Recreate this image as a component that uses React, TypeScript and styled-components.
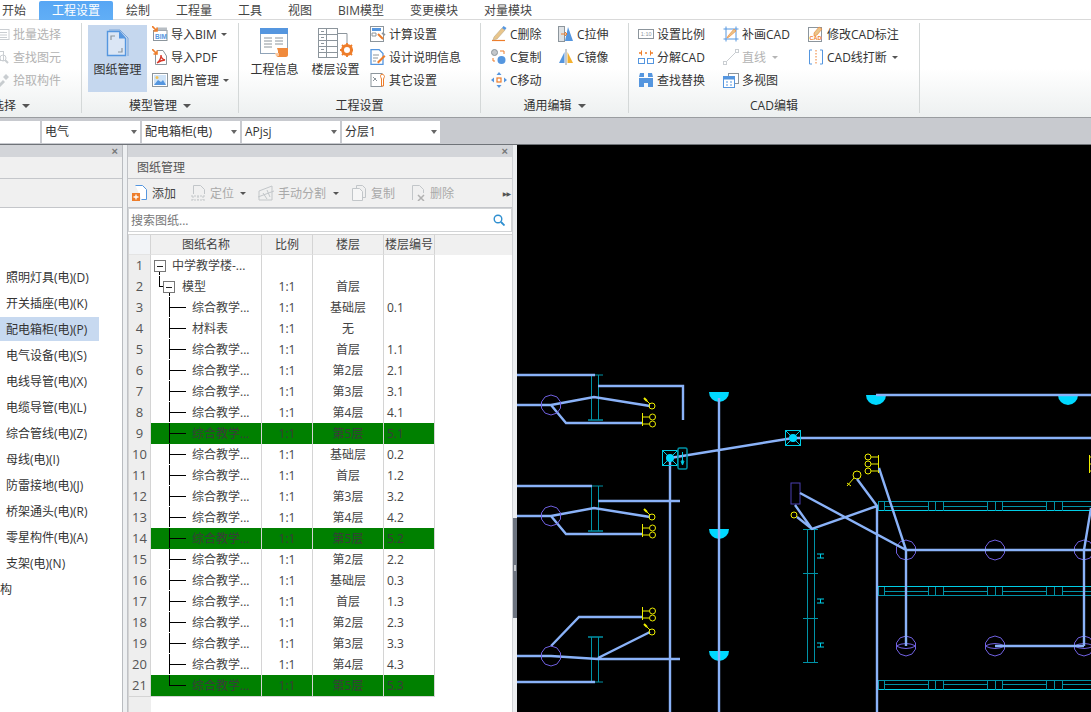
import React from "react";
import styled, { createGlobalStyle } from "styled-components";

const Global = createGlobalStyle`
  html, body { margin: 0; padding: 0; background: #fff; overflow: hidden; }
  * { box-sizing: border-box; }
  body { font-family: "Open Sans", "Noto Sans CJK SC", sans-serif; font-size: 12px; color: #333; }
`;

const Page = styled.div`
  width: 1091px; height: 712px; overflow: hidden; display: flex; flex-direction: column;
`;
const TabBar = styled.div`
  height: 20px; flex: none; display: flex; padding-left: 0; margin-left: -11px;
  border-bottom: 1px solid #d9d9d9; background: #fff;
`;
const Tab = styled.div<{ $active?: boolean }>`
  padding: 0 13px; height: 20px; margin-top: ${p => (p.$active ? 1 : 0)}px;
  line-height: ${p => (p.$active ? 19 : 21)}px;
  color: ${p => (p.$active ? "#fff" : "#444")};
  background: ${p => (p.$active ? "linear-gradient(#57a6f4,#62aff6)" : "transparent")};
  border-radius: 2px 2px 0 0;
  white-space: nowrap;
`;
const Ribbon = styled.div`
  height: 97px; flex: none; display: flex; margin-left: -59px;
  background: linear-gradient(#fff 0%, #fff 50%, #edf0f0 100%);
`;
const Group = styled.div<{ $w: number }>`
  width: ${p => p.$w}px; flex: none; margin: 3px 0 4px; display: flex; flex-direction: column;
  border-right: 1px solid #d4d8d8;
`;
const GroupBody = styled.div<{ $pl: number }>`
  height: 73px; display: flex; padding-left: ${p => p.$pl}px;
`;
const GroupLabel = styled.div<{ $low?: boolean }>`
  height: 17px; line-height: 17px; padding-top: ${p => (p.$low ? 2 : 1)}px; display: flex; align-items: center; justify-content: center; gap: 6px; color: #333;
`;
const Caret = styled.span`
  display: inline-block; width: 0; height: 0; border-left: 4px solid transparent; border-right: 4px solid transparent;
  border-top: 4px solid #555; margin-top: 1px;
`;
const SmallCaret = styled(Caret)<{ $faded?: boolean; $ml?: number }>`
  border-left-width: 3px; border-right-width: 3px; border-top-width: 3px;
  margin-left: ${p => p.$ml ?? 1}px; border-top-color: ${p => (p.$faded ? "#b5b5b5" : "#555")};
`;
const Col = styled.div<{ $w?: number; $ml?: number }>`
  display: flex; flex-direction: column; flex: none;
  width: ${p => (p.$w ? `${p.$w}px` : "auto")}; margin-left: ${p => p.$ml ?? 0}px;
`;
const SmallBtn = styled.div<{ $off?: boolean }>`
  height: 23px; display: flex; align-items: center; gap: 3px; white-space: nowrap; padding-bottom: 1px;
  color: ${p => (p.$off ? "#b3b3b3" : "#333")};
`;
const BigBtn = styled.div<{ $active?: boolean }>`
  width: 59px; height: 67px; margin-top: 2px; padding-top: 3px; display: flex; flex-direction: column; align-items: center;
  background: ${p => (p.$active ? "#c5d7ee" : "transparent")}; white-space: nowrap; flex: none;
`;
const BigIcon = styled.div`
  height: 30px; margin-bottom: 2px; display: flex; align-items: center; justify-content: center;
`;
const ComboRow = styled.div`
  height: 28px; flex: none; background: #c8cacf; border-top: 1px solid #9a9da0; border-bottom: 1px solid #6f7378;
  padding-top: 3px; display: flex; gap: 2px; margin-left: -58px;
`;
const Combo = styled.div`
  width: 98px; height: 22px; background: #fff; line-height: 22px; padding-left: 3px; position: relative; white-space: nowrap;
  display: flex; justify-content: space-between; align-items: center; padding-right: 3px;
`;
const ComboArrow = styled.span`
  width: 0; height: 0; border-left: 3px solid transparent; border-right: 3px solid transparent; border-top: 4px solid #666;
`;
const Main = styled.div`
  flex: 1; min-height: 0; display: flex; background: #e4e5e7;
`;
const LeftPanel = styled.div`
  width: 123px; flex: none; background: #fff; border-right: 1px solid #b9bcc0; display: flex; flex-direction: column;
`;
const TitleStrip = styled.div`
  height: 12px; flex: none; background: #d3d5d9; display: flex; justify-content: flex-end; align-items: center;
  padding-right: 4px; color: #777; font-size: 11px; line-height: 12px; font-family: "Liberation Sans", sans-serif; font-weight: bold;
`;
const PanelHead = styled.div`
  height: 22px; flex: none; background: #f0f0f0; border-bottom: 1px solid #c4c6ca; line-height: 22px; padding-left: 9px; color: #555;
`;
const PanelTools = styled.div`
  height: 29px; flex: none; background: #f0f0f0; border-bottom: 1px solid #c4c6ca; display: flex; align-items: center; padding-left: 4px;
`;
const CompList = styled.div`
  padding-top: 56px; display: flex; flex-direction: column;
`;
const CompItem = styled.div<{ $sel?: boolean; $pl?: number }>`
  width: 99px; height: 24px; margin: 1px 0; line-height: 26px; padding-left: ${p => p.$pl ?? 6}px; white-space: nowrap; color: #333;
  background: ${p => (p.$sel ? "#c7d9f0" : "transparent")};
`;
const Gutter = styled.div`
  width: 4px; flex: none; background: #eef0f2;
`;
const DrawPanel = styled.div`
  width: 386px; flex: none; background: #fff; border-left: 1px solid #c0c2c6; border-right: 1px solid #d0d2d6; display: flex; flex-direction: column;
`;
const Tool = styled.div<{ $off?: boolean; $ml: number }>`
  display: flex; align-items: center; gap: 4px; margin-left: ${p => p.$ml}px; white-space: nowrap;
  color: ${p => (p.$off ? "#a9a9a9" : "#444")};
`;
const More = styled.div`
  margin-left: auto; margin-right: 2px; color: #555; font-size: 6px; letter-spacing: -1px; font-family: "DejaVu Sans", sans-serif;
`;
const Search = styled.div`
  height: 24px; flex: none; margin: 0 0 2px; background: #fff; border: 1px solid #d2d4d6; display: flex; align-items: center;
  justify-content: space-between; padding: 0 6px 1px 2px; color: #777;
`;
const Table = styled.div`
  flex: 1; min-height: 0; display: flex; flex-direction: column; background: #fff; border-left: 1px solid #d4d4d4;
  background-image: linear-gradient(#eeeeee, #eeeeee); background-size: 22px 100%; background-repeat: no-repeat;
`;
const Columns = "22px 111px 51px 71px 51px";
const HeadRow = styled.div`
  height: 21px; flex: none; display: grid; grid-template-columns: ${Columns} 1fr; background: #f0f0f0;
  border-top: 1px solid #d4d4d4;
`;
const HeadCell = styled.div`
  border-right: 1px solid #d4d4d4; border-bottom: 1px solid #e4e4e4; text-align: center; line-height: 20px; color: #444; white-space: nowrap; overflow: hidden;
`;
const HeadFill = styled.div``;
const HeadCorner = styled(HeadCell)`background: #f2f4f7;`;
const Row = styled.div`
  height: 21px; flex: none; display: grid; grid-template-columns: ${Columns};
`;
const Cell = styled.div<{ $green?: boolean; $align?: string }>`
  border-right: 1px solid #d4d4d4; border-bottom: 1px solid #d4d4d4; line-height: 22px; overflow: hidden; white-space: nowrap;
  text-align: ${p => p.$align ?? "center"}; padding-left: ${p => (p.$align === "left" ? 3 : 0)}px;
  color: ${p => (p.$green ? "#3b3b3b" : "#444")};
  background: ${p => (p.$green ? "#008000" : "#fff")};
`;
const NumCell = styled.div`
  border-right: 1px solid #d4d4d4; border-bottom: 1px solid #d4d4d4; background: #eeeeee; text-align: center; line-height: 21px; color: #555;
  font-size: 13px;
`;
const NameCell = styled(Cell)`
  display: flex; align-items: flex-start; text-align: left;
`;
const Splitter = styled.div`
  width: 4px; flex: none; background: #eceef0; padding-top: 373px; display: flex; flex-direction: column;
`;
const SplitHandle = styled.div`
  height: 100px; background: #6d7480; display: flex; align-items: center; justify-content: center; color: #ccc;
`;
const HandleDot = styled.span`
  width: 2px; height: 6px; background: #c9ccd0;
`;
const Canvas = styled.div`
  flex: 1; background: #000; min-width: 0; height: 100%;
`;
const CanvasSvg = styled.svg`
  display: block; width: 574px; height: 567px;
`;

/* ---------- icons ---------- */
const B = "#5596df", O = "#ee7d2a", G = "#8c959c";
const S: React.FC<{ children: React.ReactNode; off?: boolean }> = ({ children, off }) => (
  <svg width="16" height="16" viewBox="0 0 16 16" fill="none" opacity={off ? 0.45 : 1}>{children}</svg>
);
const IcBatch = () => <S off><rect x="1" y="3.5" width="14" height="10" stroke={G} /><path d="M6 6.5h7M6 9h7M6 11.5h7" stroke={G} /></S>;
const IcFind = () => <S off><rect x="0.5" y="2.5" width="9" height="9" stroke={G} /><circle cx="9" cy="9" r="3" stroke={G} /><path d="M11 11l3 3" stroke={G} strokeWidth="2" /></S>;
const IcPick = () => <S off><path d="M3 14l6-6 2 2-6 6zM9 5l3-3 3 3-3 3z" fill={G} /></S>;
const IcBim = () => <S><rect x="1.5" y="4.5" width="13.5" height="10" fill="#fff" stroke={G} /><rect x="5" y="1.5" width="10" height="3" fill="#b8bec4" /><text x="3" y="13" fontSize="6.5" fontWeight="700" fill={B} fontFamily="Liberation Sans">BIM</text><path d="M0 0l5 5M5 1.5V5H1.5" stroke={O} strokeWidth="1.6" /></S>;
const IcPdf = () => <S><path d="M3.5 4.5v11h11V7L11 1.5H5" fill="#fff" stroke={G} /><path d="M5 14c3-2 4-5 4-8 0 3 1 4 4 5-3 0-5 1-8 3z" stroke="#d8392b" strokeWidth="1.3" /><path d="M0 0l5 5M5 1.5V5H1.5" stroke={O} strokeWidth="1.6" /></S>;
const IcPic = () => <S><rect x="0.5" y="1.5" width="15" height="13" fill="#fff" stroke={G} /><rect x="2" y="3" width="12" height="10" fill="#cfe3f7" /><path d="M2 13l4-5 3 2 2-2 3 5z" fill={B} /><circle cx="5" cy="5.5" r="1.5" fill="#f4c256" /></S>;
const IcCalc = () => <S><rect x="0.5" y="0.5" width="13" height="15" fill="#fff" stroke={G} /><rect x="2" y="2" width="9" height="3" fill={B} /><path d="M2 7h4v3H2z" stroke={G} /><path d="M8 8l5 5" stroke={O} strokeWidth="2" /><path d="M12 7l3 2" stroke={G} strokeWidth="2" /></S>;
const IcDoc = () => <S><path d="M1 .5h8l4 4v11H1z" fill="#fff" stroke={B} strokeWidth="1.3" /><path d="M3 6h6M3 9h5M3 12h3" stroke={G} /><path d="M7 13l7-7 1.500 1.500-7 7z" fill={O} /></S>;
const IcOther = () => <S><rect x="1" y="1.5" width="11" height="13" fill="#fff" stroke={G} /><path d="M3 5l4 4M3 9l3-3" stroke={G} /><path d="M11 2.500a2.500 2.500 0 013.500 2c0 1-1 1.500-1 2.500v7h-2V7c0-1-1-1.500-1-2.500 0-1 .3-1.500.5-2z" fill="#fff" stroke={O} /></S>;
const IcDel = () => <S><path d="M1 14.500h13" stroke={O} strokeWidth="1.2" /><path d="M3 11l8-9 3 2-8 9-4 1z" fill="#e9c58a" stroke="#b8a98a" strokeWidth=".6" /><path d="M11 2l1.500-2 3 2-1.500 2z" fill={B} /></S>;
const IcCopy = () => <S><circle cx="3.500" cy="3.500" r="3" fill="#c3c7cb" stroke={G} /><circle cx="10.500" cy="11" r="4" fill={B} /><path d="M9 2h4v3M2 9v3h2" stroke={O} /></S>;
const IcMove = () => <S><rect x="6" y="6" width="4" height="4" stroke={O} strokeWidth="1.2" /><path d="M8 0l2.500 3h-5zM8 16l2.500-3h-5zM0 8l3-2.500v5zM16 8l-3-2.500v5z" fill={B} /></S>;
const IcStretch = () => <S><rect x="0.500" y="0.500" width="6" height="15" fill="#dfe2e5" stroke={G} /><path d="M10 1l5 14H7z" fill={B} /><path d="M3 8h6M7 6l2 2-2 2" stroke={O} /></S>;
const IcMirror = () => <S><path d="M6.500 3v11H1z" fill={B} /><path d="M9.500 3v11H15z" fill="#f4b12f" /><path d="M8 0v16" stroke={G} /></S>;
const IcScale = () => <S><rect x="0.500" y="3.500" width="15" height="9" fill="#fff" stroke={G} /><text x="2.800" y="10.300" fontSize="5.500" fill={G} fontFamily="Liberation Sans">1:10</text></S>;
const IcSplit = () => <S><path d="M1 4h3M7 4h2M12 4h3" stroke={O} strokeWidth="1.400" /><path d="M3.500 1.500v5M12.500 1.500v5" stroke={O} /><rect x="0.500" y="9.500" width="6" height="5" stroke={B} /><rect x="9.500" y="9.500" width="6" height="5" stroke={B} /></S>;
const IcReplace = () => <S><path d="M1 5h5V1H2zM10 1h4l1 4h-5zM1 6h14v9h-5v-4H6v4H1z" fill={B} /></S>;
const IcPatch = () => <S><path d="M3 .5v15M13 .5v15M.5 3h15M.5 13h15" stroke={B} /><path d="M5 10l6-7 2 2-7 6-2 1z" fill="#e9c58a" stroke={O} strokeWidth=".6" /></S>;
const IcLine = () => <S off><path d="M2 14L14 2" stroke={G} /><rect x="0.500" y="12.500" width="3" height="3" fill="#fff" stroke={G} /><rect x="12.500" y="0.500" width="3" height="3" fill="#fff" stroke={G} /></S>;
const IcViews = () => <S><rect x="5.500" y="1.500" width="10" height="10" fill="#fff" stroke={G} /><rect x="0.500" y="4.500" width="11" height="11" fill="#fff" stroke={B} /><rect x="1" y="5" width="10" height="2.500" fill={B} /><path d="M3 10h2M7 10h2M3 13h2M7 13h2" stroke={B} /></S>;
const IcLabel = () => <S><rect x="0.500" y="1.500" width="13" height="14" fill="#fff" stroke={G} /><text x="1.500" y="13.500" fontSize="5.500" fontWeight="700" fill={O} fontFamily="Liberation Sans">CAD</text><path d="M6 7l5-6 3 2-5 6-3 1z" fill="#e9c58a" stroke={O} strokeWidth=".6" /></S>;
const IcBreak = () => <S><path d="M4 1H1.500v14H4M12 1h2.500v14H12" stroke={B} /><path d="M8 1v14" stroke={O} strokeDasharray="1.500 1.500" /></S>;

const IcSheets = () => (
  <svg width="24" height="29" viewBox="0 0 24 29" fill="none">
    <path d="M3 1h11l8 8v18" stroke="#7da7da" /><path d="M1.500 2.500h12l6 7v17h-18z" fill="#dbe6f5" stroke={B} strokeWidth="1.400" />
    <path d="M13 2.500l6 7h-6z" fill={B} /><path d="M5 11V7h4M16 19v4h-4" stroke={G} strokeWidth="1.200" />
  </svg>
);
const IcInfo = () => (
  <svg width="31" height="30" viewBox="0 0 31 30" fill="none">
    <rect x="1.500" y="0.500" width="27" height="25" fill="#fff" stroke="#8fa3b8" />
    <rect x="1" y="0" width="28" height="6" fill={B} />
    <path d="M5 10h8M5 13h8M5 16h8M5 19h8M16 10h8M16 13h8M16 16h8" stroke={G} />
    <path d="M18 20h11v7c0 1-1 2-2 2H17c1 0 2-1 2-2v-4z" fill="#f08a3c" /><path d="M16 25h4v3h-3z" fill="#f8c79f" />
  </svg>
);
const IcFloor = () => (
  <svg width="35" height="30" viewBox="0 0 35 30" fill="none">
    <rect x="0.500" y="0.500" width="19" height="29" fill="#fff" stroke={G} />
    <path d="M0 6.500h20M0 12.500h20M0 18.500h20M0 24.500h20M8.500 0v30" stroke={G} />
    <path d="M3 3.500h3M3 9.500h3M3 15.500h3M3 21.500h3" stroke={G} />
    <path d="M20 5.500h9v10" stroke={G} />
    <circle cx="29" cy="22" r="4.500" stroke={O} strokeWidth="3" />
    <path d="M29 15v3M29 26v3M22 22h3M33 22h3M24 17l2 2M32 25l2 2M34 17l-2 2M26 25l-2 2" stroke={O} strokeWidth="1.800" />
  </svg>
);
const IcAdd = () => <S><path d="M3.500.500h7l4 4v10h-5" fill="#fff" stroke={B} /><rect x="0" y="8" width="8" height="8" fill={O} /><path d="M4 9.500v5M1.500 12h5" stroke="#fff" strokeWidth="1.300" /></S>;
const IcLocate = () => <S off><path d="M3.500 9V.500h7l4 4V9" stroke={G} /><path d="M1 11h14M3 11v4M8 11v4M13 11v4M1 15h14" stroke={G} strokeDasharray="2 1" /></S>;
const IcManual = () => <S off><path d="M1 15V6l13-5v14z" stroke={G} /><path d="M0 12l16-6M5 8l4 6M9 5l3 7" stroke={G} /></S>;
const IcDup = () => <S off><path d="M5.500 3V.500h6l3 3v9h-3" stroke={G} /><path d="M1.500 3.500h7l3 3v9h-10z" fill="#fff" stroke={G} /></S>;
const IcRemove = () => <S off><path d="M2.500 15V.500h7l4 4V8" stroke={G} /><path d="M8 10l6 6M14 10l-6 6" stroke="#666" strokeWidth="1.500" /></S>;
const IcSearch = () => (
  <svg width="12" height="12" viewBox="0 0 12 12" fill="none"><circle cx="5" cy="5" r="3.800" stroke="#2f8fd0" strokeWidth="1.400" /><path d="M8 8l3.500 3.500" stroke="#2f8fd0" strokeWidth="1.800" /></svg>
);

/* ---------- tree connector ---------- */
type Kind = "root" | "model" | "leaf" | "last";
const Tree: React.FC<{ kind: Kind }> = ({ kind }) => {
  const w = kind === "root" ? 21 : kind === "model" ? 31 : 41;
  return (
    <svg width={w} height="20" viewBox={`0 0 ${w} 20`} fill="none" shapeRendering="crispEdges">
      {kind === "root" && <>
        <path d="M8.500 16v4" stroke="#000" />
        <rect x="3.500" y="5.500" width="11" height="11" rx="1" fill="#fff" stroke="#777" />
        <path d="M6 11h6" stroke="#222" />
      </>}
      {kind === "model" && <>
        <path d="M8.500 0v10.500h4M18.500 16v4" stroke="#000" />
        <rect x="12.500" y="5.500" width="11" height="11" rx="1" fill="#fff" stroke="#777" />
        <path d="M15 11h6" stroke="#222" />
      </>}
      {kind === "leaf" && <path d="M18.500 0v21M18 10.500h17" stroke="#000" />}
      {kind === "last" && <path d="M18.500 0v10.500H35" stroke="#000" />}
    </svg>
  );
};

/* ---------- canvas ---------- */
const L = "#8ab2f8", T = "#0092a6", C = "#00cde6", Y = "#eeee00", V = "#7060e0", K = "#00d8ff";
const Wire: React.FC<{ d: string }> = ({ d }) => <path d={d} stroke={L} strokeWidth="2.400" fill="none" />;
const Octa: React.FC<{ x: number; y: number; lens?: boolean }> = ({ x, y, lens }) => {
  const pts = Array.from({ length: 10 }, (_, i) => {
    const a = (i / 10) * Math.PI * 2 + Math.PI / 10;
    return `${(x + Math.cos(a) * 10).toFixed(1)},${(y + Math.sin(a) * 10).toFixed(1)}`;
  }).join(" ");
  return <g stroke={V} fill="none"><polygon points={pts} />{lens && <path d={`M${x - 10} ${y}Q${x} ${y - 5} ${x + 10} ${y}Q${x} ${y + 5} ${x - 10} ${y}`} />}</g>;
};
const Beam: React.FC<{ y1: number; y2: number; thickTop?: boolean }> = ({ y1, y2, thickTop }) => (
  <g stroke={T} fill="none">
    <path d={`M591.500 ${y1}V${y2}M598.500 ${y1}V${y2}`} />
    <path d={thickTop ? `M588 ${y1}H603` : `M592 ${y1}H603`} strokeWidth={thickTop ? 1.500 : 1} />
    <path d={thickTop ? `M592 ${y2}H603` : `M588 ${y2}H603`} strokeWidth={thickTop ? 1 : 1.500} />
  </g>
);
const Switch: React.FC<{ x: number; y: number }> = ({ x, y }) => (
  <g stroke={Y} fill="none"><circle cx={x} cy={y} r="3" /><path d={`M${x - 8} ${y - 8}L${x - 2} ${y - 2}`} /><path d={`M${x - 8} ${y - 8}L${x - 5} ${y - 5}`} strokeWidth="2" /></g>
);
const Duo: React.FC<{ y: number }> = ({ y }) => (
  <g stroke={Y} fill="none"><path d={`M642.500 ${y - 4}V${y + 9}M643 ${y}H649M643 ${y + 7}H649`} /><circle cx="652.500" cy={y} r="3" /><circle cx="652.500" cy={y + 7} r="3" /></g>
);
const Lamp: React.FC<{ x: number; y: number }> = ({ x, y }) => (
  <path d={`M${x - 10} ${y}H${x + 10}A10 10 0 0 1 ${x - 10} ${y}Z`} fill={K} />
);
const Box: React.FC<{ x: number; y: number }> = ({ x, y }) => (
  <g><rect x={x - 7.500} y={y - 7.500} width="15" height="15" stroke={C} fill="none" /><path d={`M${x - 7} ${y - 7}L${x + 7} ${y + 7}M${x + 7} ${y - 7}L${x - 7} ${y + 7}`} stroke={C} /><circle cx={x} cy={y} r="4" fill={K} /></g>
);
const Strip: React.FC<{ a: number; b: number; c: number; ca: string; cb: string; cc: string }> = ({ a, b, c, ca, cb, cc }) => {
  const vs = [878.500, 884.500, 928.500, 935.500, 943.500, 987.500, 995.500, 1002.500, 1046.500, 1054.500, 1062.500];
  const mids: [number, number][] = [[885, 928], [944, 987], [1003, 1046], [1063, 1091]];
  return (
    <g fill="none" shapeRendering="crispEdges">
      <path d={`M878 ${a}H1091`} stroke={ca} />
      <path d={`M878 ${c}H1091`} stroke={cc} />
      {mids.map(([s, e]) => <path key={s} d={`M${s} ${b}H${e}`} stroke={cb} />)}
      {vs.map(v => <path key={v} d={`M${v} ${a}V${c}`} stroke={T} />)}
    </g>
  );
};
const Drawing = () => (
  <CanvasSvg viewBox="517 145 574 567">
    {/* group A */}
    <Beam y1={375} y2={420} />
    <Wire d="M517 375H595M598 386H683V420M517 405H551L594 397L650 406M551 405L566 423H643" />
    <Octa x={551} y={405} /><Switch x={652} y={406} /><Duo y={417} />
    {/* group B */}
    <Beam y1={486} y2={531} />
    <Wire d="M517 486H592M598 501H680M517 516H551L594 508L650 517M551 516L566 534H643" />
    <Octa x={551} y={516} /><Switch x={652} y={517} /><Duo y={528} />
    {/* group C */}
    <Beam y1={637} y2={682} thickTop />
    <Wire d="M517 656H551L598 659H680M551 646L579 617H643M598 658L650 632M517 682H595" />
    <Octa x={551} y={656} /><Switch x={652} y={632} /><Duo y={611} />
    {/* risers */}
    <Lamp x={719} y={392} /><Lamp x={719} y={529} /><Lamp x={719} y={651} />
    <Wire d="M670 458V712M719 398V712M670 458L793 438H1091" />
    <Box x={670} y={458} /><Box x={793} y={438} />
    <rect x="678" y="448" width="9" height="21" rx="1.500" stroke={T} strokeWidth="1.500" fill="none" />
    <path d="M682.500 452V464M681 461h3l-1.500 4z" stroke={C} fill="none" />
    {/* right area */}
    <Lamp x={876} y={395} /><Lamp x={1068} y={395} />
    <Wire d="M876 395H1091" />
    <g stroke={Y} fill="none">
      <path d="M878.500 455V473M871 457H878M871 464H878M871 471H878" />
      <circle cx="868" cy="457" r="3" /><circle cx="868" cy="464" r="3" /><circle cx="868" cy="471" r="3" />
      <circle cx="857" cy="475" r="4" /><path d="M854 478L847 486M847 483L851 486" />
      <circle cx="794" cy="515" r="3" />
      <path d="M1089.500 455V473M1089 457H1091M1089 464H1091M1089 471H1091" />
    </g>
    <rect x="791" y="483" width="9" height="21" stroke="#4a3fb0" fill="none" />
    <Strip a={501.500} b={506.500} c={510.500} ca={T} cb={T} cc={C} />
    <Strip a={586.500} b={591.500} c={595.500} ca={C} cb={T} cc={T} />
    <Strip a={680.500} b={684.500} c={689.500} ca={T} cb={T} cc={C} />
    <g stroke={T} fill="none">
      <path d="M807.500 529V663M814.500 529V663M803 529.500H818M803 573.500H818M803 618.500H818M803 662.500H818" />
    </g>
    <g stroke={C} fill="none">
      <path d="M817 554H824M817 558H824M820.500 554V558" /><path d="M817 599H824M817 603H824M820.500 599V603" /><path d="M817 643H824M817 647H824M820.500 643V647" />
    </g>
    <Octa x={906} y={550} /><Octa x={995} y={550} /><Octa x={1084} y={550} />
    <Octa x={906} y={646} lens /><Octa x={995} y={646} lens /><Octa x={1084} y={646} lens />
    <Wire d="M857 479L877 506V712M879 468L906 550H1091M800 493L906 550V646M795 505L812 529M797 517L812 529L877 506M1084 550V646M995 646H1084M1084 550L1091 508" />
  </CanvasSvg>
);

/* ---------- data ---------- */
const tabs = ["开始", "工程设置", "绘制", "工程量", "工具", "视图", "BIM模型", "变更模块", "对量模块"];
const comps = ["照明灯具(电)(D)", "开关插座(电)(K)", "配电箱柜(电)(P)", "电气设备(电)(S)", "电线导管(电)(X)", "电缆导管(电)(L)", "综合管线(电)(Z)", "母线(电)(I)", "防雷接地(电)(J)", "桥架通头(电)(R)", "零星构件(电)(A)", "支架(电)(N)"];
const N = "综合教学...";
const rows: { n: string; k: Kind; r: string; f: string; c: string; g?: boolean }[] = [
  { n: "中学教学楼-...", k: "root", r: "", f: "", c: "" },
  { n: "模型", k: "model", r: "1:1", f: "首层", c: "" },
  { n: N, k: "leaf", r: "1:1", f: "基础层", c: "0.1" },
  { n: "材料表", k: "leaf", r: "1:1", f: "无", c: "" },
  { n: N, k: "leaf", r: "1:1", f: "首层", c: "1.1" },
  { n: N, k: "leaf", r: "1:1", f: "第2层", c: "2.1" },
  { n: N, k: "leaf", r: "1:1", f: "第3层", c: "3.1" },
  { n: N, k: "leaf", r: "1:1", f: "第4层", c: "4.1" },
  { n: N, k: "leaf", r: "1:1", f: "第5层", c: "5.1", g: true },
  { n: N, k: "leaf", r: "1:1", f: "基础层", c: "0.2" },
  { n: N, k: "leaf", r: "1:1", f: "首层", c: "1.2" },
  { n: N, k: "leaf", r: "1:1", f: "第3层", c: "3.2" },
  { n: N, k: "leaf", r: "1:1", f: "第4层", c: "4.2" },
  { n: N, k: "leaf", r: "1:1", f: "第5层", c: "5.2", g: true },
  { n: N, k: "leaf", r: "1:1", f: "第2层", c: "2.2" },
  { n: N, k: "leaf", r: "1:1", f: "基础层", c: "0.3" },
  { n: N, k: "leaf", r: "1:1", f: "首层", c: "1.3" },
  { n: N, k: "leaf", r: "1:1", f: "第2层", c: "2.3" },
  { n: N, k: "leaf", r: "1:1", f: "第3层", c: "3.3" },
  { n: N, k: "leaf", r: "1:1", f: "第4层", c: "4.3" },
  { n: N, k: "last", r: "1:1", f: "第5层", c: "5.3", g: true },
];

export default function App() {
  return (
    <Page>
      <Global />
      <TabBar>
        {tabs.map(t => <Tab key={t} $active={t === "工程设置"}>{t}</Tab>)}
      </TabBar>
      <Ribbon>
        <Group $w={141}>
          <GroupBody $pl={53}>
            <Col>
              <SmallBtn $off><IcBatch />批量选择</SmallBtn>
              <SmallBtn $off><IcFind />查找图元</SmallBtn>
              <SmallBtn $off><IcPick />拾取构件</SmallBtn>
            </Col>
          </GroupBody>
          <GroupLabel>选择<Caret /></GroupLabel>
        </Group>
        <Group $w={157}>
          <GroupBody $pl={6}>
            <BigBtn $active><BigIcon><IcSheets /></BigIcon>图纸管理</BigBtn>
            <Col $ml={5}>
              <SmallBtn><IcBim />导入BIM<SmallCaret /></SmallBtn>
              <SmallBtn><IcPdf />导入PDF</SmallBtn>
              <SmallBtn><IcPic />图片管理<SmallCaret /></SmallBtn>
            </Col>
          </GroupBody>
          <GroupLabel>模型管理<Caret /></GroupLabel>
        </Group>
        <Group $w={242}>
          <GroupBody $pl={6}>
            <BigBtn><BigIcon><IcInfo /></BigIcon>工程信息</BigBtn>
            <Col $ml={2}><BigBtn><BigIcon><IcFloor /></BigIcon>楼层设置</BigBtn></Col>
            <Col $ml={5}>
              <SmallBtn><IcCalc />计算设置</SmallBtn>
              <SmallBtn><IcDoc />设计说明信息</SmallBtn>
              <SmallBtn><IcOther />其它设置</SmallBtn>
            </Col>
          </GroupBody>
          <GroupLabel $low>工程设置</GroupLabel>
        </Group>
        <Group $w={148}>
          <GroupBody $pl={10}>
            <Col $w={67}>
              <SmallBtn><IcDel />C删除</SmallBtn>
              <SmallBtn><IcCopy />C复制</SmallBtn>
              <SmallBtn><IcMove />C移动</SmallBtn>
            </Col>
            <Col>
              <SmallBtn><IcStretch />C拉伸</SmallBtn>
              <SmallBtn><IcMirror />C镜像</SmallBtn>
            </Col>
          </GroupBody>
          <GroupLabel>通用编辑<Caret /></GroupLabel>
        </Group>
        <Group $w={291}>
          <GroupBody $pl={9}>
            <Col $w={85}>
              <SmallBtn><IcScale />设置比例</SmallBtn>
              <SmallBtn><IcSplit />分解CAD</SmallBtn>
              <SmallBtn><IcReplace />查找替换</SmallBtn>
            </Col>
            <Col $w={85}>
              <SmallBtn><IcPatch />补画CAD</SmallBtn>
              <SmallBtn $off><IcLine />直线<SmallCaret $faded $ml={3} /></SmallBtn>
              <SmallBtn><IcViews />多视图</SmallBtn>
            </Col>
            <Col>
              <SmallBtn><IcLabel />修改CAD标注</SmallBtn>
              <SmallBtn><IcBreak />CAD线打断<SmallCaret $ml={2} /></SmallBtn>
            </Col>
          </GroupBody>
          <GroupLabel $low>CAD编辑</GroupLabel>
        </Group>
      </Ribbon>
      <ComboRow>
        {["", "电气", "配电箱柜(电)", "APjsj", "分层1"].map((t, i) => (
          <Combo key={i}>{t}<ComboArrow /></Combo>
        ))}
      </ComboRow>
      <Main>
        <LeftPanel>
          <TitleStrip>×</TitleStrip>
          <PanelHead />
          <PanelTools />
          <CompList>
            {comps.map(c => <CompItem key={c} $sel={c.startsWith("配电箱柜")}>{c}</CompItem>)}
            <CompItem $pl={0}>构</CompItem>
          </CompList>
        </LeftPanel>
        <Gutter />
        <DrawPanel>
          <TitleStrip>×</TitleStrip>
          <PanelHead>图纸管理</PanelHead>
          <PanelTools>
            <Tool $ml={0}><IcAdd />添加</Tool>
            <Tool $off $ml={14}><IcLocate />定位<SmallCaret $ml={2} /></Tool>
            <Tool $off $ml={12}><IcManual />手动分割<SmallCaret $ml={3} /></Tool>
            <Tool $off $ml={12}><IcDup />复制</Tool>
            <Tool $off $ml={15}><IcRemove />删除</Tool>
            <More>▶▶</More>
          </PanelTools>
          <Search>搜索图纸...<IcSearch /></Search>
          <Table>
            <HeadRow>
              <HeadCorner />
              <HeadCell>图纸名称</HeadCell>
              <HeadCell>比例</HeadCell>
              <HeadCell>楼层</HeadCell>
              <HeadCell>楼层编号</HeadCell>
              <HeadFill />
            </HeadRow>
            {rows.map((r, i) => (
              <Row key={i}>
                <NumCell>{i + 1}</NumCell>
                <NameCell $green={r.g}><Tree kind={r.k} />{r.n}</NameCell>
                <Cell $green={r.g}>{r.r}</Cell>
                <Cell $green={r.g}>{r.f}</Cell>
                <Cell $green={r.g} $align="left">{r.c}</Cell>
              </Row>
            ))}
          </Table>
        </DrawPanel>
        <Splitter><SplitHandle><HandleDot /></SplitHandle></Splitter>
        <Canvas><Drawing /></Canvas>
      </Main>
    </Page>
  );
}
